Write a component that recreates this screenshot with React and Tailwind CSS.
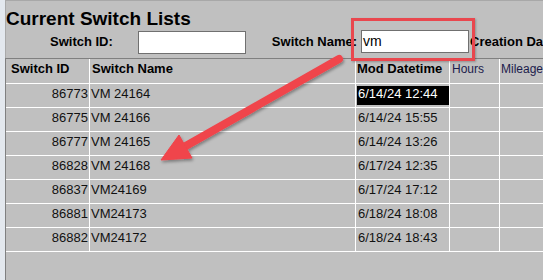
import React from "react";

const rows = [
  { id: "86773", name: "VM 24164", mod: "6/14/24 12:44", selected: true },
  { id: "86775", name: "VM 24166", mod: "6/14/24 15:55" },
  { id: "86777", name: "VM 24165", mod: "6/14/24 13:26" },
  { id: "86828", name: "VM 24168", mod: "6/17/24 12:35" },
  { id: "86837", name: "VM24169", mod: "6/17/24 17:12" },
  { id: "86881", name: "VM24173", mod: "6/18/24 18:08" },
  { id: "86882", name: "VM24172", mod: "6/18/24 18:43" },
];

const Arrow = () => (
  <svg
    className="absolute left-0 top-0 pointer-events-none"
    width="543"
    height="280"
    viewBox="0 0 543 280"
  >
    <defs>
      <filter id="shadow" x="-20%" y="-20%" width="140%" height="140%">
        <feDropShadow dx="1" dy="2" stdDeviation="1.5" floodColor="#000" floodOpacity="0.35" />
      </filter>
    </defs>
    <g filter="url(#shadow)" fill="#f0444b" stroke="#f0444b">
      <line x1="339" y1="59" x2="184" y2="147" strokeWidth="8" strokeLinecap="round" />
      <polygon points="161,160 179,135 192,158" strokeWidth="1" strokeLinejoin="round" />
    </g>
  </svg>
);

export default function App() {
  return (
    <div className="relative w-[543px] h-[280px] overflow-hidden flex bg-[#c0c0c0] font-['Liberation_Sans',Arial,sans-serif] text-[#111]">
      {/* left frame strip */}
      <div className="w-[5px] shrink-0 bg-[#e3e8ee]" />

      <div className="flex-1 flex flex-col border-t border-[#a8a8a8]">
        {/* title + filters */}
        <div className="border-l border-[#a9a9a9]">
          <h1 className="pt-[7px] text-[19px] leading-[22px] font-bold text-black">
            Current Switch Lists
          </h1>
          <div className="flex items-start h-[28px] whitespace-nowrap">
            <span className="ml-[44px] mt-[2px] text-[13px] leading-[20px] font-bold text-black">
              Switch ID:
            </span>
            <div className="ml-[25px] mt-[1px] w-[108px] h-[23px] bg-white border border-[#707070]" />
            <span className="ml-[26px] mt-[2px] text-[13px] leading-[20px] font-bold text-black">
              Switch Name:
            </span>
            <div className="ml-[4px] w-[108px] h-[23px] bg-white border border-[#707070] pl-[1px] text-[14px] leading-[20px] text-black">
              vm
            </div>
            <span className="ml-[1px] mt-[2px] text-[13px] leading-[20px] font-bold text-black">
              Creation Da
            </span>
          </div>
        </div>

        {/* table */}
        <div className="flex-1 border-l border-t border-[#808080]">
          <div className="flex h-[25px] border-b border-white whitespace-nowrap">
            <div className="w-[84px] shrink-0 border-r border-white pl-[5px] text-[13px] leading-[20px] font-bold text-black">
              Switch ID
            </div>
            <div className="w-[266px] shrink-0 border-r border-white pl-[2px] text-[13px] leading-[20px] font-bold text-black">
              Switch Name
            </div>
            <div className="w-[94px] shrink-0 border-r border-white pl-[1px] text-[13px] leading-[20px] font-bold text-black">
              Mod Datetime
            </div>
            <div className="w-[50px] shrink-0 border-r border-white pl-[2px] pt-[1px] text-[12px] leading-[18px] text-[#1c1c4c]">
              Hours
            </div>
            <div className="flex-1 pl-[1px] pt-[1px] text-[12px] leading-[18px] text-[#1c1c4c]">
              Mileage
            </div>
          </div>

          {rows.map((r) => (
            <div
              key={r.id}
              className="flex h-[24px] border-b border-white whitespace-nowrap text-[13px]"
            >
              <div className="w-[84px] shrink-0 border-r border-white pr-[1px] text-right leading-[20px]">
                {r.id}
              </div>
              <div className="w-[266px] shrink-0 border-r border-white pl-[1px] leading-[20px]">
                {r.name}
              </div>
              <div className="w-[94px] shrink-0 border-r border-white">
                {r.selected ? (
                  <div className="ml-[1px] mt-[2px] h-[19px] bg-black text-white pl-[1px] leading-[16px]">
                    {r.mod}
                  </div>
                ) : (
                  <div className="pl-[2px] leading-[20px]">{r.mod}</div>
                )}
              </div>
              <div className="w-[50px] shrink-0 border-r border-white" />
              <div className="flex-1" />
            </div>
          ))}
        </div>
      </div>

      {/* annotation: highlight box */}
      <div className="absolute left-[351px] top-[18px] w-[124px] h-[43px] border-[3px] border-[#e9474e] shadow-[1px_1px_2px_rgba(0,0,0,0.25)] pointer-events-none" />
      <Arrow />
    </div>
  );
}
